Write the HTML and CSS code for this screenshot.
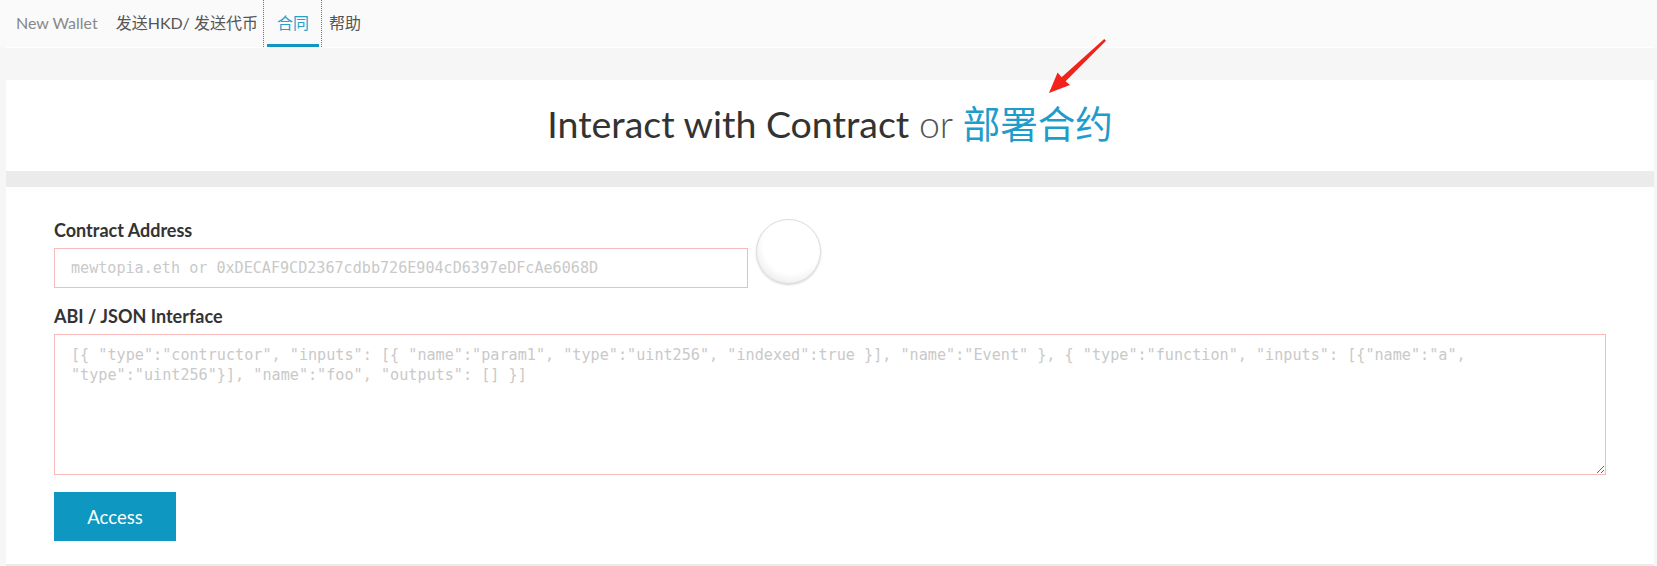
FILE: index.html
```html
<!DOCTYPE html>
<html lang="zh">
<head>
<meta charset="utf-8">
<title>Interact with Contract</title>
<link rel="stylesheet" href="styles.css">
</head>
<body>
<nav class="topnav">
  <ul class="tabs">
    <li class="tab-item"><a class="tab tab-muted">New Wallet</a></li>
    <li class="tab-item"><a class="tab tab-before-focus">发送HKD/ 发送代币</a></li>
    <li class="tab-item tab-focus"><a class="tab tab-active">合同</a></li>
    <li class="tab-item"><a class="tab tab-after-focus">帮助</a></li>
  </ul>
</nav>
<div class="nav-rule"></div>
<main class="container">
  <section class="card header-card">
    <h1 class="title">Interact with Contract <span class="title-or">or</span> <a class="title-link">部署合约</a></h1>
  </section>
  <section class="card form-card">
    <div class="address-row">
      <div class="address-col">
        <label class="field-label">Contract Address</label>
        <input class="field-input" type="text" placeholder="mewtopia.eth or 0xDECAF9CD2367cdbb726E904cD6397eDFcAe6068D">
      </div>
      <div class="identicon"></div>
    </div>
    <label class="field-label field-label-abi">ABI / JSON Interface</label>
    <textarea class="field-textarea" placeholder='[{ "type":"contructor", "inputs": [{ "name":"param1", "type":"uint256", "indexed":true }], "name":"Event" }, { "type":"function", "inputs": [{"name":"a", "type":"uint256"}], "name":"foo", "outputs": [] }]'></textarea>
    <button class="btn-primary" type="button">Access</button>
  </section>
</main>
<svg class="annotation-arrow" width="70" height="64" viewBox="0 0 70 64">
  <polygon points="9,57 30,49 25.6,45.2 66,4.8 64.2,3 21.6,41.2 17.6,36.6" fill="#f2231b"/>
</svg>
</body>
</html>
```
FILE: styles.css
```css
html, body {
  margin: 0;
  padding: 0;
}
body {
  background: #f6f6f6;
  font-family: "Lato", "Noto Sans CJK SC", sans-serif;
  color: #333;
  position: relative;
  height: 566px;
  overflow: hidden;
}
.topnav {
  background: #fafafa;
  height: 47px;
}
.tabs {
  list-style: none;
  margin: 0;
  padding: 0 0 0 7px;
  display: flex;
  height: 47px;
}
.tab-item {
  display: flex;
  height: 47px;
}
.tab {
  display: flex;
  align-items: center;
  height: 44px;
  padding: 0 9px;
  font-size: 16px;
  color: #555;
  border-bottom: 3px solid transparent;
}
.tab-muted {
  color: #888;
}
.tab-before-focus {
  padding-right: 5px;
}
.tab-focus {
  border-left: 1px dotted #1f8fb8;
  border-right: 1px dotted #1f8fb8;
  padding: 0 2px 0 3px;
}
.tab-active {
  color: #2a9fc9;
  border-bottom-color: #0e97c0;
  padding: 0 10px;
}
.tab-after-focus {
  padding-left: 7px;
}
.nav-rule {
  height: 1px;
  background: #ffffff;
  margin: 0 3px 0 6px;
}
.container {
  margin: 32px 3px 0 6px;
  background: #ebebeb;
  padding-bottom: 4px;
}
.card {
  background: #fff;
}
.header-card {
  height: 91px;
  display: flex;
  align-items: center;
  justify-content: center;
  margin-bottom: 16px;
}
.title {
  margin: 0;
  font-size: 37.5px;
  font-weight: 400;
  color: #333;
  line-height: 1.2;
  padding-bottom: 4px;
}
.title-or {
  font-weight: 300;
  color: #555;
}
.title-link {
  color: #1e9ccc;
}
.form-card {
  padding: 32px 48px 23px;
}
.address-row {
  display: flex;
  align-items: flex-end;
  gap: 8px;
}
.address-col {
  display: flex;
  flex-direction: column;
}
.field-label {
  display: block;
  font-size: 18px;
  font-weight: 700;
  color: #333;
  line-height: 20px;
  margin-bottom: 8px;
}
.field-label-abi {
  margin-top: 18px;
}
.field-input {
  box-sizing: border-box;
  width: 694px;
  height: 40px;
  border: 1px solid #f7b9b9;
  padding: 0 16px;
  font-family: "DejaVu Sans Mono", "Liberation Mono", monospace;
  font-size: 15.1px;
  color: #333;
  outline: none;
  margin: 0;
}
.field-input::placeholder,
.field-textarea::placeholder {
  color: #c9c9c9;
}
.identicon {
  width: 63px;
  height: 63px;
  border-radius: 50%;
  margin-bottom: 4px;
  background: radial-gradient(circle at 55% 40%, #ffffff 0, #ffffff 55%, #ececec 80%, #cfcfcf 100%);
  box-shadow: 0 1px 2px rgba(0,0,0,0.18);
  border: 1px solid #dcdcdc;
}
.field-textarea {
  display: block;
  box-sizing: border-box;
  width: 100%;
  height: 141px;
  border: 1px solid #f7b9b9;
  padding: 10px 16px;
  font-family: "DejaVu Sans Mono", "Liberation Mono", monospace;
  font-size: 15.15px;
  line-height: 20px;
  margin: 0;
  outline: none;
}
.btn-primary {
  display: block;
  margin-top: 17px;
  width: 122px;
  height: 49px;
  border: none;
  background: #0e97c0;
  color: #fff;
  font-family: "Lato", sans-serif;
  font-size: 18.5px;
  padding: 0;
}
.annotation-arrow {
  position: absolute;
  left: 1040px;
  top: 36px;
}
```
